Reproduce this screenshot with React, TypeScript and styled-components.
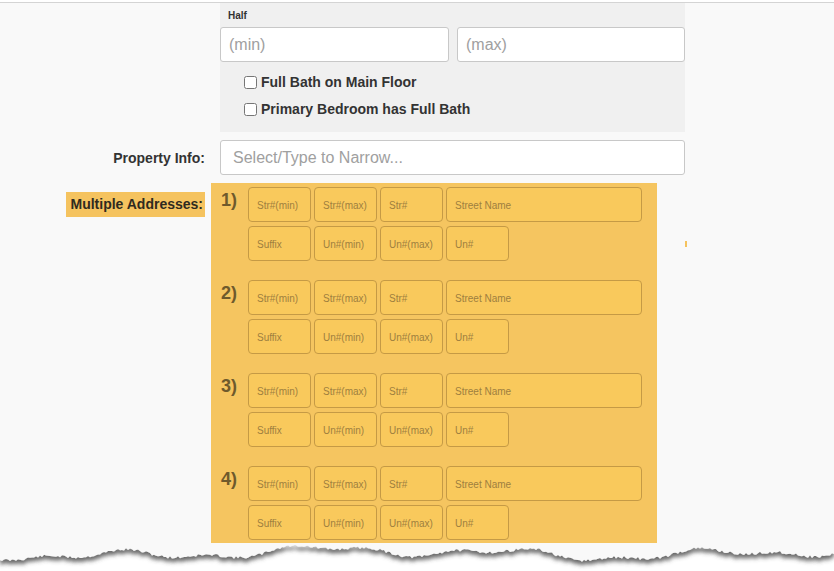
import React from 'react';
import styled, { createGlobalStyle } from 'styled-components';

const GlobalStyle = createGlobalStyle`
  html, body {
    margin: 0;
    padding: 0;
    background: #ffffff;
  }
  body {
    font-family: "Liberation Sans", Arial, sans-serif;
    color: #333;
  }
`;

const Page = styled.div`
  width: 834px;
  height: 571px;
  overflow: hidden;
  background: #fff;
  padding-top: 2px;
  box-sizing: border-box;
`;

const Sheet = styled.div`
  position: relative;
  background: #f9f9f9;
  border-top: 1px solid #d4d4d4;
`;

const BathPanel = styled.div`
  margin-left: 220px;
  width: 465px;
  background: #f0f0f0;
  padding: 6px 0 8px;
`;

const SmallLabel = styled.div`
  font-size: 10px;
  font-weight: bold;
  line-height: 14px;
  padding-left: 8px;
  color: #333;
  margin-bottom: 4px;
`;

const RangeRow = styled.div`
  display: grid;
  grid-template-columns: 229px 228px;
  column-gap: 8px;
`;

const TextInput = styled.input<{ $pad?: number }>`
  box-sizing: border-box;
  height: 35px;
  width: 100%;
  border: 1px solid #c8c8c8;
  border-radius: 3px;
  background: #fff;
  padding: 0 ${p => p.$pad ?? 8}px;
  font-family: "Liberation Sans", Arial, sans-serif;
  font-size: 16px;
  color: #555;
  outline: none;

  &::placeholder {
    color: #a0a0a0;
  }
`;

const CheckList = styled.div`
  display: flex;
  flex-direction: column;
  gap: 9px;
  padding: 11px 0 6px 24px;
`;

const CheckRow = styled.label`
  display: flex;
  align-items: center;
  gap: 4px;
  font-size: 14px;
  font-weight: bold;
  line-height: 18px;
  color: #333;

  input {
    margin: 0;
    width: 13px;
    height: 13px;
  }
`;

const FieldRow = styled.div<{ $top: number }>`
  display: flex;
  align-items: flex-start;
  margin-top: ${p => p.$top}px;
  position: relative;
`;

const FieldLabel = styled.div<{ $padTop: number }>`
  width: 205px;
  flex: none;
  text-align: right;
  padding-top: ${p => p.$padTop}px;
  box-sizing: border-box;
  font-size: 14px;
  font-weight: bold;
  line-height: 18px;
  color: #333;
`;

const Highlight = styled.span`
  display: inline-block;
  background: #f5c35f;
  line-height: 25px;
  padding: 0 2px 0 4px;
  color: #2f2a20;
`;

const PropertyInput = styled.div`
  margin-left: 15px;
  width: 465px;
`;

const AddressPanel = styled.div`
  margin-left: 6px;
  width: 446px;
  background: #f5c560;
  padding: 4px 0 3px;
  display: flex;
  flex-direction: column;
  gap: 19px;
`;

const AddressGroup = styled.div`
  display: flex;
`;

const GroupNumber = styled.div`
  width: 37px;
  flex: none;
  padding: 2px 0 0 10px;
  box-sizing: border-box;
  font-size: 18px;
  font-weight: bold;
  line-height: 22px;
  color: #6f5a2c;
`;

const AddressGrid = styled.div`
  display: grid;
  grid-template-columns: 63px 63px 63px 196px;
  grid-auto-rows: 35px;
  gap: 4px 3px;
`;

const AddrInput = styled.input<{ $narrow?: boolean }>`
  box-sizing: border-box;
  width: ${p => (p.$narrow ? '63px' : '100%')};
  height: 35px;
  margin: 0;
  border: 1px solid #c59a45;
  border-radius: 4px;
  background: #f9c95c;
  padding: 2px 8px 0;
  font-family: "Liberation Sans", Arial, sans-serif;
  font-size: 10px;
  color: #7a5f28;
  outline: none;

  &::placeholder {
    color: #9e7f3f;
  }
`;

const StrayMark = styled.span`
  position: absolute;
  left: 685px;
  top: 58px;
  width: 2px;
  height: 6px;
  background: #f5c35f;
`;

const TornEdge = styled.svg`
  display: block;
`;

const rowA = ['Str#(min)', 'Str#(max)', 'Str#', 'Street Name'];
const rowB = ['Suffix', 'Un#(min)', 'Un#(max)', 'Un#'];

// jagged paper edge, deterministic noise
const tearPath = () => {
  let seed = 11;
  const rnd = () => {
    seed = (seed * 9301 + 49297) % 233280;
    return seed / 233280;
  };
  const pts: string[] = [];
  for (let x = 0; x <= 834; x += 2) {
    const base =
      10 +
      4 * Math.sin(x / 31 + 0.8) +
      2.5 * Math.sin(x / 13 + 1.3) +
      3 * Math.sin(x / 83 + 0.4);
    const y = Math.max(2, base + (rnd() - 0.5) * 2.8);
    pts.push(`${x},${y.toFixed(1)}`);
  }
  return `M0,0 L${pts.join(' L')} L834,0 Z`;
};

export default function App() {
  const d = tearPath();
  return (
    <Page>
      <GlobalStyle />
      <Sheet>
        <BathPanel>
          <SmallLabel>Half</SmallLabel>
          <RangeRow>
            <TextInput placeholder="(min)" />
            <TextInput placeholder="(max)" />
          </RangeRow>
          <CheckList>
            <CheckRow>
              <input type="checkbox" />
              Full Bath on Main Floor
            </CheckRow>
            <CheckRow>
              <input type="checkbox" />
              Primary Bedroom has Full Bath
            </CheckRow>
          </CheckList>
        </BathPanel>

        <FieldRow $top={8}>
          <FieldLabel $padTop={9}>Property Info:</FieldLabel>
          <PropertyInput>
            <TextInput $pad={12} placeholder="Select/Type to Narrow..." />
          </PropertyInput>
        </FieldRow>

        <FieldRow $top={8}>
          <FieldLabel $padTop={9}>
            <Highlight>Multiple Addresses:</Highlight>
          </FieldLabel>
          <AddressPanel>
            {[1, 2, 3, 4].map(n => (
              <AddressGroup key={n}>
                <GroupNumber>{n})</GroupNumber>
                <AddressGrid>
                  {rowA.map(p => (
                    <AddrInput key={p} placeholder={p} />
                  ))}
                  {rowB.map((p, i) => (
                    <AddrInput key={p} placeholder={p} $narrow={i === 3} />
                  ))}
                </AddressGrid>
              </AddressGroup>
            ))}
          </AddressPanel>
          <StrayMark />
        </FieldRow>

        <TornEdge width="834" height="28" viewBox="0 0 834 28">
          <defs>
            <filter id="tearShadow" x="-5%" y="-50%" width="110%" height="250%">
              <feDropShadow dx="0" dy="4" stdDeviation="2.2" floodColor="#444" floodOpacity="0.8" />
            </filter>
          </defs>
          <rect x="0" y="0" width="834" height="28" fill="#fff" />
          <path d={d} fill="#f9f9f9" filter="url(#tearShadow)" />
        </TornEdge>
      </Sheet>
    </Page>
  );
}
